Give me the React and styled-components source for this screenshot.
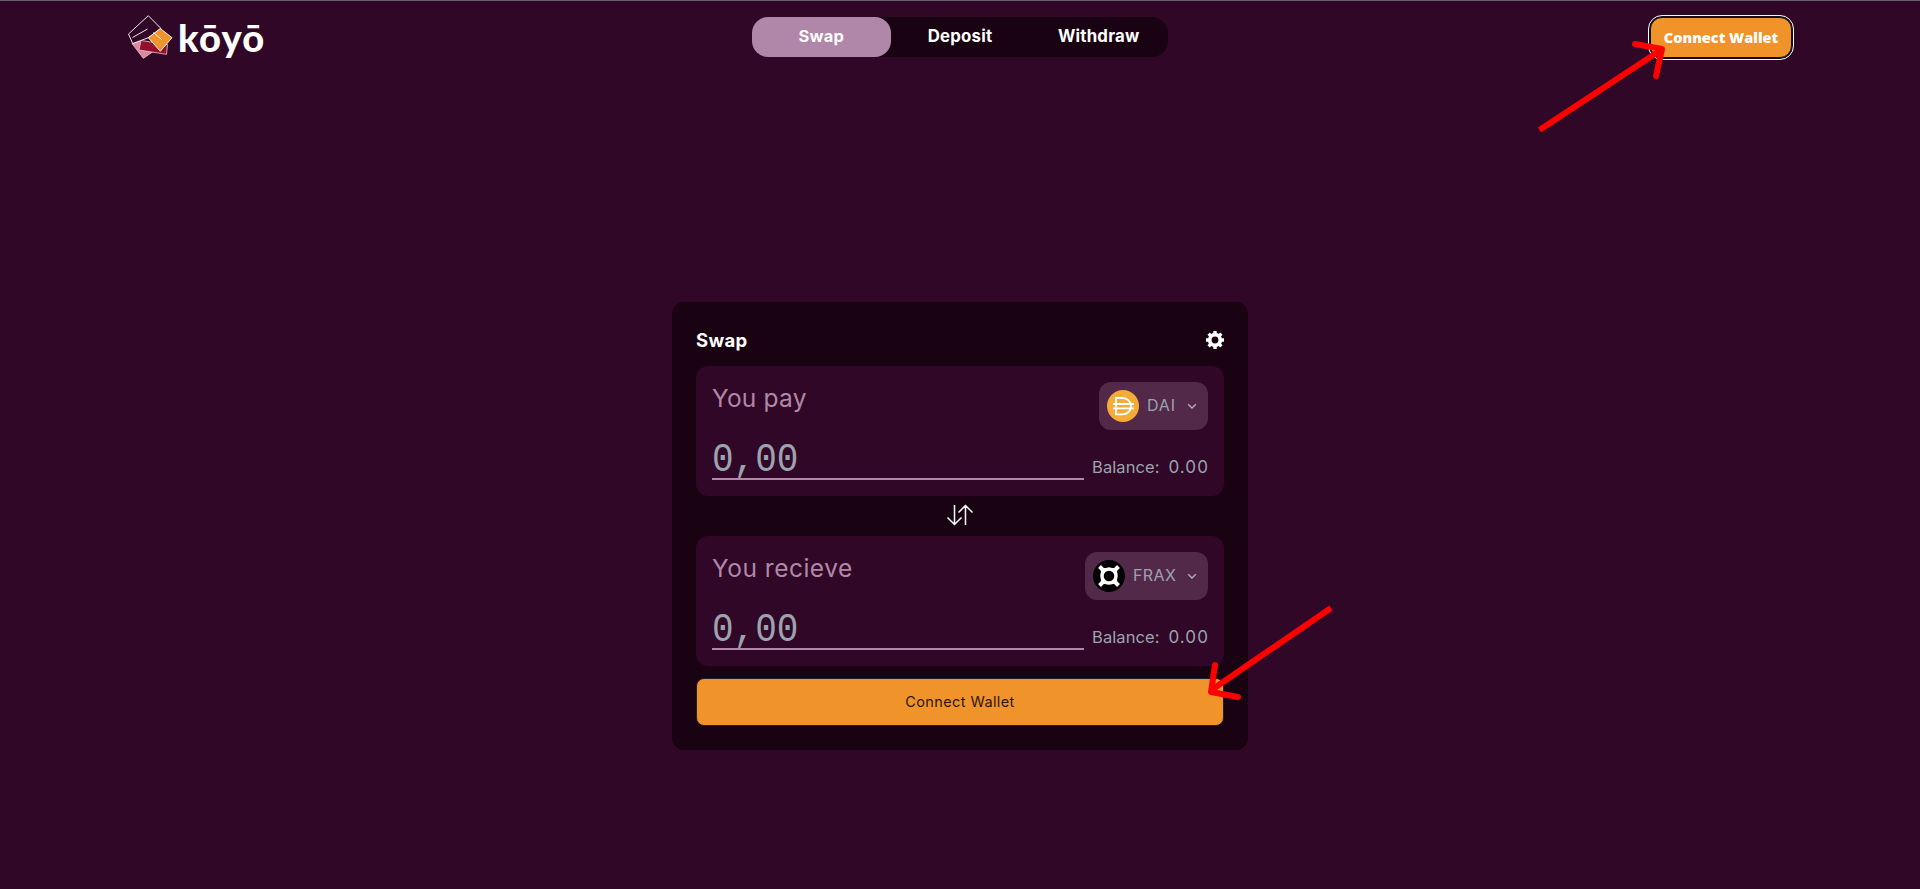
import React from 'react';
import styled, { createGlobalStyle } from 'styled-components';

const Global = createGlobalStyle`
  * { box-sizing: border-box; }
  body { margin: 0; background: #300726; font-family: Inter, 'Liberation Sans', sans-serif; color: #fff; }
  button { font-family: inherit; border: 0; margin: 0; padding: 0; }
`;

const Page = styled.div`
  position: relative;
  height: 889px;
  display: flex;
  flex-direction: column;
  border-top: 1px solid #62616a;
  overflow: hidden;
`;
const Header = styled.header`
  height: 75px;
  padding: 14px 128px 0;
  display: grid;
  grid-template-columns: 1fr 416px 1fr;
  align-items: start;
`;
const Brand = styled.div`
  display: flex;
  align-items: flex-start;
  height: 46px;
`;
const LogoMark = styled.svg`
  width: 46px;
  height: 46px;
  flex: none;
`;
const Wordmark = styled.span`
  font: 900 38px/44px 'Lato', sans-serif;
  margin-left: 4px;
  letter-spacing: 1.2px;
`;
const Tabs = styled.nav`
  display: grid;
  grid-template-columns: repeat(3, 1fr);
  height: 40px;
  margin-top: 2px;
  border-radius: 16px;
  background: #190212;
`;
const Tab = styled.button`
  border-radius: 16px;
  background: ${(p) => (p.$active ? '#b087a8' : 'transparent')};
  color: #fff;
  font-size: ${(p) => p.$size || '16.5px'};
  font-weight: 700;
  line-height: 38px;
  padding-bottom: 2px;
  letter-spacing: 0.2px;
`;
const WalletButton = styled.button`
  justify-self: end;
  width: 142px;
  height: 41px;
  margin-top: 2px;
  padding-top: 1px;
  border: 1px solid #101010;
  border-radius: 12px;
  outline: 1px solid #fff;
  outline-offset: 1px;
  box-shadow: 0 0 0 1px #101010;
  background: #f0932b;
  color: #fff;
  font: 800 14.5px/38px 'Open Sans', sans-serif;
  white-space: nowrap;
`;
const Main = styled.main`
  flex: 1;
  display: flex;
  justify-content: center;
  align-items: flex-start;
  padding-top: 226px;
`;
const Card = styled.section`
  width: 576px;
  height: 448px;
  padding: 24px;
  border-radius: 12px;
  background: #190212;
  display: flex;
  flex-direction: column;
`;
const CardHeader = styled.div`
  display: flex;
  justify-content: space-between;
  align-items: center;
  height: 28px;
  margin-bottom: 12px;
`;
const Title = styled.h1`
  margin: 0;
  font-size: 18.5px;
  font-weight: 700;
  line-height: 28px;
  letter-spacing: 0.3px;
`;
const Box = styled.div`
  height: 130px;
  padding: 16px;
  border-radius: 12px;
  background: #300726;
  display: flex;
  flex-direction: column;
  justify-content: space-between;
`;
const BoxTop = styled.div`
  display: flex;
  justify-content: space-between;
  align-items: flex-start;
`;
const Label = styled.div`
  font-size: 24.5px;
  line-height: 32px;
  color: #b087a8;
  letter-spacing: ${(p) => p.$spacing};
`;
const TokenButton = styled.button`
  display: flex;
  align-items: center;
  width: ${(p) => p.$width};
  height: 48px;
  padding: 0 8px;
  border-radius: 12px;
  background: #532949;
  color: #9ca3af;
  font-size: 16px;
`;
const TokenIcon = styled.svg`
  width: 32px;
  height: 32px;
  margin-right: 8px;
  flex: none;
`;
const TokenName = styled.span`
  flex: 1;
  text-align: left;
  line-height: 24px;
  margin-top: -2px;
  letter-spacing: ${(p) => p.$spacing};
`;
const Chevron = styled.svg`
  width: 16px;
  height: 16px;
`;
const BoxBottom = styled.div`
  display: flex;
  align-items: flex-end;
  gap: 8px;
`;
const Amount = styled.div`
  width: 372px;
  height: 42px;
  padding-top: 3px;
  border-bottom: 2px solid #b087a8;
  color: #9ca3af;
  font: 400 36px/40px 'Liberation Mono', monospace;
`;
const AmountText = styled.span`
  display: inline-block;
  transform: scaleY(1.14);
`;
const Balance = styled.div`
  flex: 1;
  display: flex;
  justify-content: space-between;
  color: #9ca3af;
  font-size: 16.5px;
  line-height: 24px;
  padding-bottom: 1px;
  letter-spacing: 0.1px;
  white-space: nowrap;
`;
const BalanceValue = styled.span`
  font-size: 17px;
  letter-spacing: 1.1px;
  margin-right: -1px;
`;
const SwapDirection = styled.div`
  height: 40px;
  padding-bottom: 2px;
  flex: none;
  display: flex;
  justify-content: center;
  align-items: center;
`;
const SubmitButton = styled.button`
  height: 48px;
  margin-top: 12px;
  padding-bottom: 2px;
  border: 1px solid #1b2029;
  border-radius: 8px;
  background: #f0932b;
  color: #2c1707;
  font-size: 14.5px;
  letter-spacing: 0.4px;
`;
const Annotations = styled.svg`
  position: absolute;
  left: 0;
  top: -1px;
  pointer-events: none;
`;

const DaiIcon = () => (
  <TokenIcon viewBox="0 0 32 32">
    <circle cx="16" cy="16" r="16" fill="#f5ac37" />
    <path d="M9 8h6.500a8.600 8.200 0 0 1 0 16.400H9zM6 14h21M6 18.400h21" fill="none" stroke="#fff" strokeWidth="1.800" />
  </TokenIcon>
);

const FraxIcon = () => (
  <TokenIcon viewBox="0 0 32 32">
    <circle cx="16" cy="16" r="16" fill="#000" />
    <circle cx="16" cy="16" r="7" fill="none" stroke="#fff" strokeWidth="3.400" />
    <path d="M6.500 6.500l4.500 4.500M25.500 6.500l-4.500 4.500M6.500 25.500l4.500-4.500M25.500 25.500l-4.500-4.500" stroke="#fff" strokeWidth="4" />
    <path d="M9 8.500h14M9 23.500h14M8.500 9v14M23.500 9v14" stroke="#fff" strokeWidth="1.200" />
  </TokenIcon>
);

const Gear = () => (
  <svg width="18" height="18" viewBox="0 0 18 18">
    <circle cx="9" cy="9" r="5.300" fill="none" stroke="#fff" strokeWidth="3.800" />
    <path d="M9 0v3M9 15v3M0 9h3M15 9h3M2.600 2.600l2 2M13.400 13.400l2 2M2.600 15.400l2-2M13.400 4.600l2-2" stroke="#fff" strokeWidth="3.400" />
  </svg>
);

function AmountBox({ label, spacing, token, tokenSpacing, width, icon }) {
  return (
    <Box>
      <BoxTop>
        <Label $spacing={spacing}>{label}</Label>
        <TokenButton $width={width}>
          {icon}
          <TokenName $spacing={tokenSpacing}>{token}</TokenName>
          <Chevron viewBox="0 0 16 16">
            <path d="M4.200 6.200L8 10l3.800-3.800" fill="none" stroke="#b3b0bb" strokeWidth="1.300" />
          </Chevron>
        </TokenButton>
      </BoxTop>
      <BoxBottom>
        <Amount><AmountText>0,00</AmountText></Amount>
        <Balance><span>Balance:</span><BalanceValue>0.00</BalanceValue></Balance>
      </BoxBottom>
    </Box>
  );
}

export default function App() {
  return (
    <Page>
      <Global />
      <Header>
        <Brand>
          <LogoMark viewBox="0 0 46 46" stroke="#fff" strokeWidth="0.900">
            <path d="M4 28.500L12 26l14 10-10.700 7.300z" fill="#d98ba0" stroke="#e6b3c0" />
            <path d="M13 25.500L39.500 29.500 38.500 39.300 11 35z" fill="#930f2c" stroke="#e0b0bc" />
            <path d="M20.300.700L33 13.500 20.500 22.700 4.700 28.500.500 19z" fill="#300726" />
            <path d="M4.500 22.500L19.500 14" fill="none" />
            <path d="M32.300 13.500L44 22.700 32.300 36.300 20.300 22.700z" fill="#f0932b" />
            <path d="M25.500 17.500l8 7" fill="none" />
          </LogoMark>
          <Wordmark>kōyō</Wordmark>
        </Brand>
        <Tabs>
          <Tab $active>Swap</Tab>
          <Tab $size="16.800px">Deposit</Tab>
          <Tab $size="16.800px">Withdraw</Tab>
        </Tabs>
        <WalletButton>Connect Wallet</WalletButton>
      </Header>
      <Main>
        <Card>
          <CardHeader>
            <Title>Swap</Title>
            <Gear />
          </CardHeader>
          <AmountBox label="You pay" spacing="0.2px" token="DAI" tokenSpacing="0.8px" width="109px" icon={<DaiIcon />} />
          <SwapDirection>
            <svg width="28" height="22" viewBox="0 0 28 22" fill="none" stroke="#fff" strokeWidth="1.500">
              <path d="M8.500 1v19M1.500 13.500l7 7 7-7M19.500 21V2M12.500 8.500l7-7 7 7" />
            </svg>
          </SwapDirection>
          <AmountBox label="You recieve" spacing="0.5px" token="FRAX" tokenSpacing="0.4px" width="123px" icon={<FraxIcon />} />
          <SubmitButton>Connect Wallet</SubmitButton>
        </Card>
      </Main>
      <Annotations width="1920" height="889" fill="none" stroke="#f00">
        <path d="M1539.500 130L1661 50M1331 608L1211.500 690" strokeWidth="6" />
        <path d="M1635 44l27 5-6 27M1215 665l-4 27 27 5" strokeWidth="6" strokeLinecap="round" strokeLinejoin="round" />
      </Annotations>
    </Page>
  );
}
